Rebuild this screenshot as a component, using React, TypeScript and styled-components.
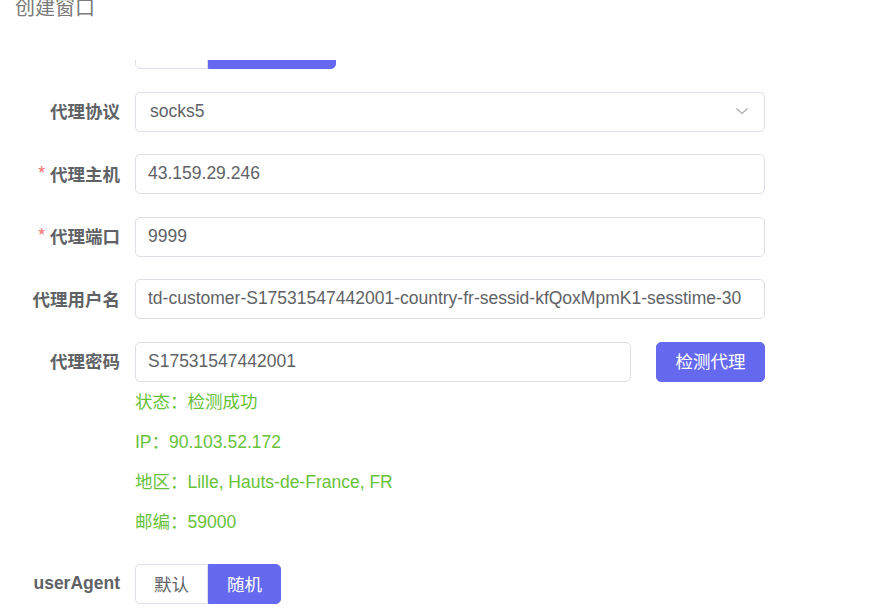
import styled, { createGlobalStyle } from 'styled-components';

const GlobalStyle = createGlobalStyle`
  html, body {
    margin: 0;
    padding: 0;
    background: #fff;
  }
  body {
    font-family: 'Liberation Sans', 'Noto Sans CJK SC', sans-serif;
    overflow: hidden;
  }
`;

const primary = '#6569ef';

const Dialog = styled.div`
  width: 870px;
  height: 611px;
  overflow: hidden;
`;

const Header = styled.div`
  height: 20px;
  margin-bottom: 40px;
  padding-left: 15px;
  display: flex;
  align-items: flex-end;
  overflow: hidden;
`;

const Title = styled.span`
  font-size: 20px;
  line-height: 24px;
  color: #7a7a7a;
`;

const Form = styled.div`
  width: 750px;
  padding-left: 15px;
`;

const ClippedRow = styled.div`
  height: 9px;
  margin-bottom: 22.5px;
  padding-left: 120px;
  display: flex;
  align-items: flex-end;
  overflow: hidden;
`;

const FormItem = styled.div<{ $last?: boolean }>`
  display: flex;
  align-items: flex-start;
  margin-bottom: ${p => (p.$last ? 0 : '22.5px')};
`;

const Label = styled.label`
  width: 120px;
  flex: 0 0 120px;
  box-sizing: border-box;
  padding-right: 15px;
  height: 38px;
  display: flex;
  align-items: center;
  justify-content: flex-end;
  font-size: 17.5px;
  font-weight: bold;
  color: #606266;
  white-space: nowrap;
`;

const Star = styled.span`
  color: #f56c6c;
  font-weight: normal;
  margin-right: 5px;
`;

const Content = styled.div`
  flex: 1;
  min-width: 0;
`;

const InputLine = styled.div`
  display: flex;
  align-items: center;
  gap: 25px;
`;

const InputBox = styled.div<{ $pad?: number }>`
  flex: 1;
  height: 40px;
  box-sizing: border-box;
  border: 1px solid #dcdfe6;
  border-radius: 5px;
  background: #fff;
  padding: 0 ${p => p.$pad ?? 12}px 1px;
  display: flex;
  align-items: center;
  justify-content: space-between;
  font-size: 17.5px;
  color: #606266;
  white-space: nowrap;
  overflow: hidden;
`;

const Chevron = styled.svg`
  width: 14px;
  height: 14px;
  margin-right: 1px;
  flex: none;
`;

const PrimaryButton = styled.button`
  height: 40px;
  padding: 0 18.5px 3px;
  border: 1px solid ${primary};
  border-radius: 5px;
  background: ${primary};
  color: #fff;
  font-family: inherit;
  font-size: 17.5px;
  white-space: nowrap;
`;

const Status = styled.div`
  font-size: 17.5px;
  line-height: 40px;
  color: #67c23a;
`;

const Group = styled.div`
  display: inline-flex;
`;

const GroupButton = styled.button<{ $active?: boolean; $first?: boolean; $wide?: boolean }>`
  height: 40px;
  box-sizing: border-box;
  padding: 0 ${p => (p.$wide ? '19px' : '18px')} 2px;
  font-family: inherit;
  font-size: 17.5px;
  white-space: nowrap;
  background: ${p => (p.$active ? primary : '#fff')};
  color: ${p => (p.$active ? '#fff' : '#606266')};
  border: 1px solid ${p => (p.$active ? primary : '#dcdfe6')};
  border-radius: ${p => (p.$first ? '5px 0 0 5px' : '0 5px 5px 0')};
`;

const fields = [
  { label: '代理主机', value: '43.159.29.246', required: true },
  { label: '代理端口', value: '9999', required: true },
  {
    label: '代理用户名',
    value: 'td-customer-S17531547442001-country-fr-sessid-kfQoxMpmK1-sesstime-30',
  },
];

const statusLines = ['状态：检测成功', 'IP：90.103.52.172', '地区：Lille, Hauts-de-France, FR', '邮编：59000'];

export default function App() {
  return (
    <>
      <GlobalStyle />
      <Dialog>
        <Header>
          <Title>创建窗口</Title>
        </Header>
        <Form>
          <ClippedRow>
            <Group>
              <GroupButton $first>直连</GroupButton>
              <GroupButton $active $wide>自定义代理</GroupButton>
            </Group>
          </ClippedRow>

          <FormItem>
            <Label>代理协议</Label>
            <Content>
              <InputBox $pad={14}>
                <span>socks5</span>
                <Chevron viewBox="0 0 14 14">
                  <polyline points="1.5,4.5 7,9.5 12.5,4.5" fill="none" stroke="#a8abb2" strokeWidth="1.2" />
                </Chevron>
              </InputBox>
            </Content>
          </FormItem>

          {fields.map(f => (
            <FormItem key={f.label}>
              <Label>
                {f.required && <Star>*</Star>}
                {f.label}
              </Label>
              <Content>
                <InputBox>{f.value}</InputBox>
              </Content>
            </FormItem>
          ))}

          <FormItem>
            <Label>代理密码</Label>
            <Content>
              <InputLine>
                <InputBox>S17531547442001</InputBox>
                <PrimaryButton>检测代理</PrimaryButton>
              </InputLine>
              {statusLines.map(line => (
                <Status key={line}>{line}</Status>
              ))}
            </Content>
          </FormItem>

          <FormItem $last>
            <Label>userAgent</Label>
            <Content>
              <Group>
                <GroupButton $first>默认</GroupButton>
                <GroupButton $active>随机</GroupButton>
              </Group>
            </Content>
          </FormItem>
        </Form>
      </Dialog>
    </>
  );
}
